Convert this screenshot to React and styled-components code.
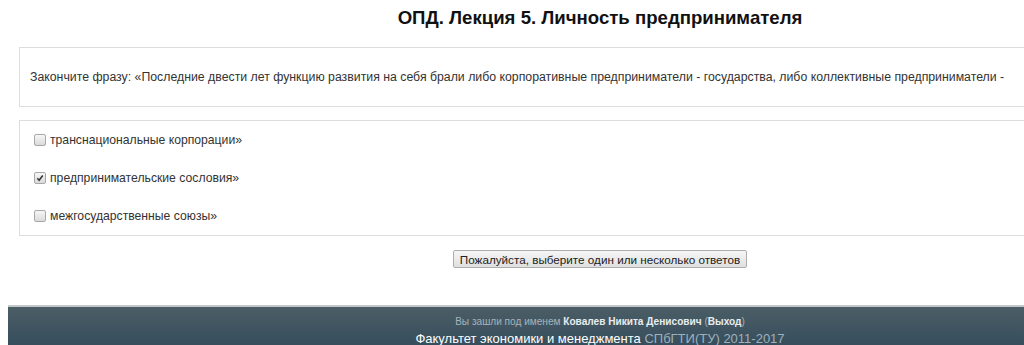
import React from "react";
import styled, { createGlobalStyle } from "styled-components";

const GlobalStyle = createGlobalStyle`
	html, body {
		margin: 0;
		padding: 0;
		background: #fff;
		overflow: hidden;
	}
	body {
		font-family: "Liberation Sans", Arial, sans-serif;
		color: #333;
	}
`;

const Page = styled.div`
	width: 1184px;
	padding: 0 8px;
`;

const Title = styled.h2`
	margin: 0;
	padding-top: 7px;
	height: 47px;
	box-sizing: border-box;
	text-align: center;
	font-size: 18.6px;
	line-height: 22px;
	font-weight: bold;
	color: #111;
`;

const Panel = styled.div`
	margin: 0 11px;
	border: 1px solid #ddd;
	background: #fff;
`;

const Question = styled(Panel)`
	display: flex;
	align-items: center;
	height: 58px;
	padding: 0 10px;
	font-size: 12.3px;
	color: #333;
	margin-bottom: 13px;
`;

const Answers = styled(Panel)`
	display: flex;
	flex-direction: column;
`;

const Option = styled.label`
	display: flex;
	align-items: center;
	gap: 4px;
	height: 38px;
	padding-left: 14px;
	font-size: 12.2px;
	color: #333;
`;

const Box = styled.span`
	width: 10px;
	height: 10px;
	border: 1px solid #a8a8a8;
	border-radius: 2px;
	background: linear-gradient(#f6f6f6, #dadada);
	display: flex;
	align-items: center;
	justify-content: center;
`;

const Actions = styled.div`
	display: flex;
	justify-content: center;
	padding: 14px 0 37px;
`;

const Button = styled.button`
	font-family: "Liberation Sans", Arial, sans-serif;
	font-size: 11.7px;
	color: #222;
	padding: 0 6px;
	height: 18px;
	border: 1px solid #adadad;
	border-radius: 2px;
	background: linear-gradient(#f6f6f6, #e0e0e0);
`;

const Footer = styled.footer`
	border-top: 2px solid #c4c8c8;
	background: linear-gradient(#4b5e66, #2a4457 60px);
	height: 60px;
	text-align: center;
	padding-top: 7px;
	box-sizing: border-box;
`;

const LoginLine = styled.div`
	font-size: 10.1px;
	color: #a7b3bb;
	line-height: 16px;
`;

const UserLink = styled.span`
	color: #e8ecee;
	font-weight: bold;
`;

const Credits = styled.div`
	font-size: 13px;
	color: #fff;
	line-height: 18px;
`;

const Muted = styled.span`
	color: #9fb0bd;
`;

const CheckMark = () => (
	<svg width="8" height="8" viewBox="0 0 9 9">
		<path d="M1.5 4.8 L3.5 7 L7.6 1.6" fill="none" stroke="#333" strokeWidth="1.7" />
	</svg>
);

const answers = [
	{ text: "транснациональные корпорации»", checked: false },
	{ text: "предпринимательские сословия»", checked: true },
	{ text: "межгосударственные союзы»", checked: false },
];

export default function App() {
	return (
		<>
			<GlobalStyle />
			<Page>
				<Title>ОПД. Лекция 5. Личность предпринимателя</Title>
				<Question>
					Закончите фразу: «Последние двести лет функцию развития на себя брали либо корпоративные
					предприниматели - государства, либо коллективные предприниматели -
				</Question>
				<Answers>
					{answers.map((a) => (
						<Option key={a.text}>
							<Box>{a.checked && <CheckMark />}</Box>
							{a.text}
						</Option>
					))}
				</Answers>
				<Actions>
					<Button>Пожалуйста, выберите один или несколько ответов</Button>
				</Actions>
				<Footer>
					<LoginLine>
						Вы зашли под именем <UserLink>Ковалев Никита Денисович</UserLink>{" "}
						(<UserLink>Выход</UserLink>)
					</LoginLine>
					<Credits>
						Факультет экономики и менеджмента <Muted>СПбГТИ(ТУ) 2011-2017</Muted>
					</Credits>
				</Footer>
			</Page>
		</>
	);
}
